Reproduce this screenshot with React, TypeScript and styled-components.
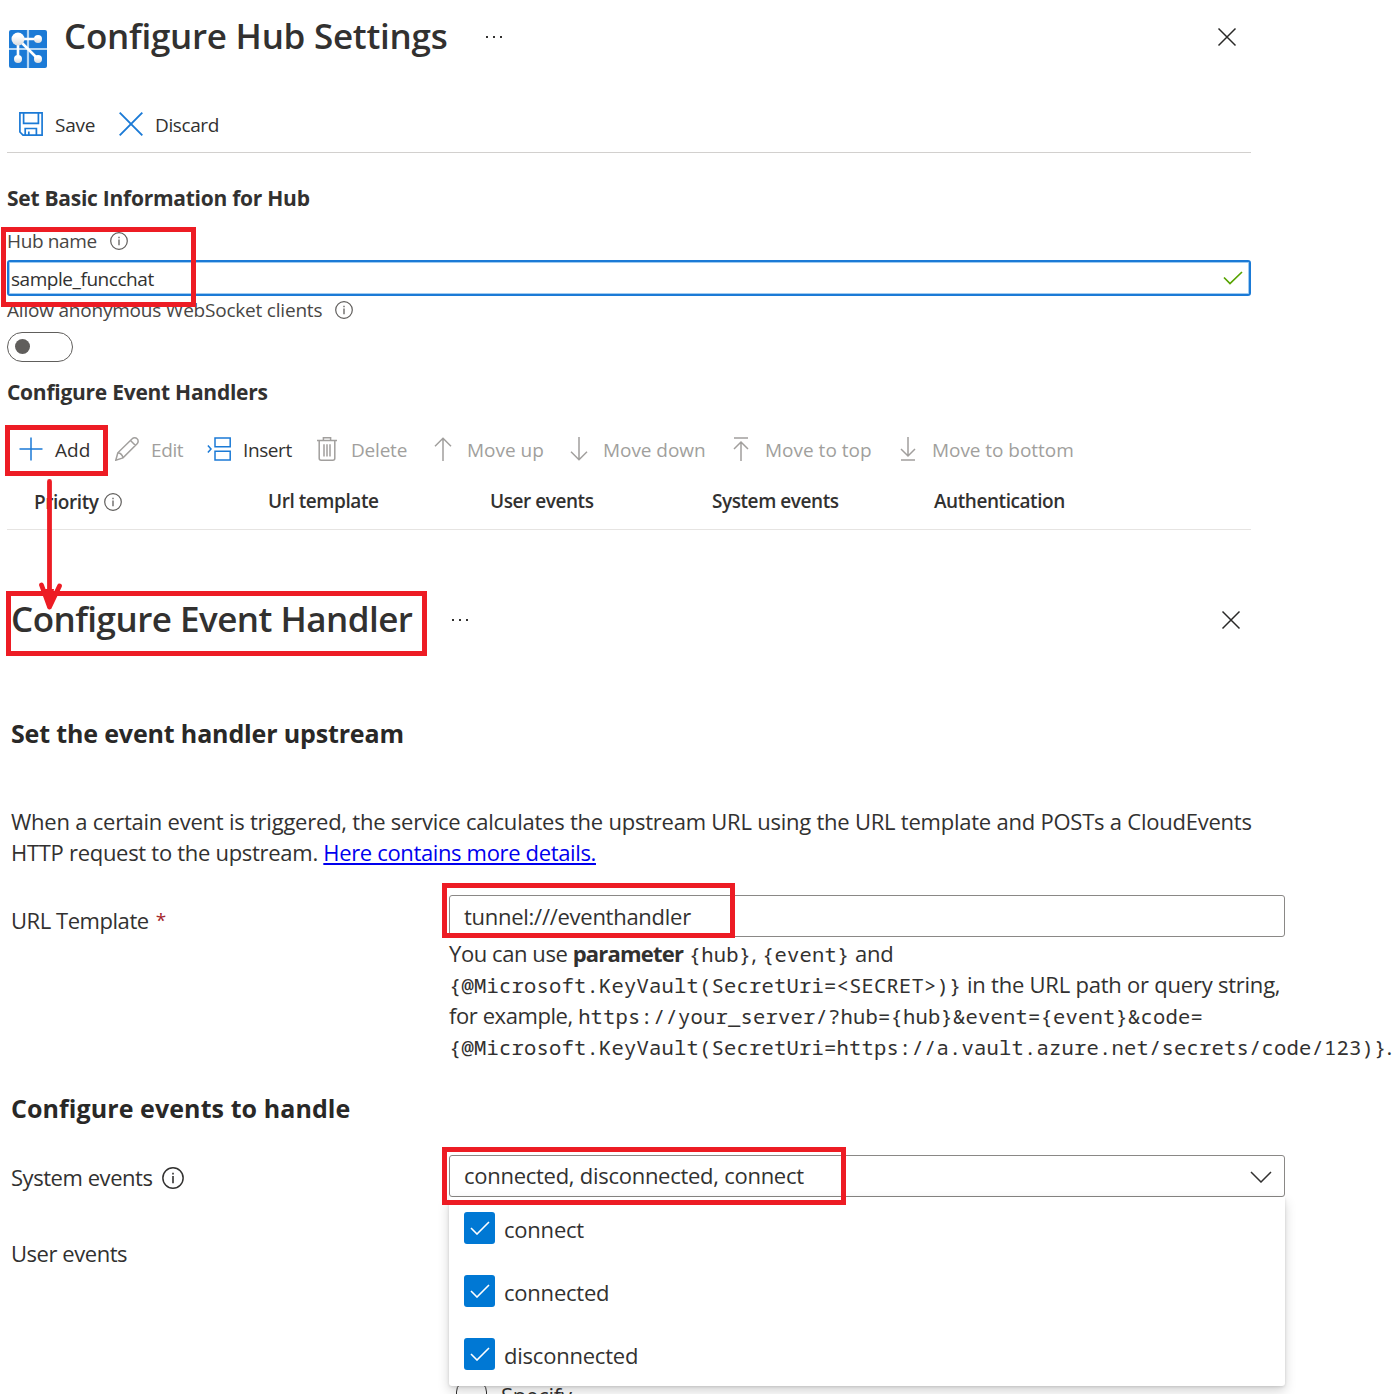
import React from 'react';
import styled, { createGlobalStyle, css } from 'styled-components';

const sans = '"Open Sans", "Noto Sans", sans-serif';
const mono = '"Noto Sans Mono", "DejaVu Sans Mono", monospace';
const ink = '#323130';
const blue = '#1b7ad6';
const red = '#ed1c24';

const GlobalStyle = createGlobalStyle`
  * { box-sizing: border-box; }
  body { margin: 0; background: #fff; color: ${ink}; font-family: ${sans}; }
  h1, h2, h3, p { margin: 0; }
  svg { display: block; flex: none; fill: none; }
`;

const Page = styled.main`
  position: relative;
  width: 1393px;
  height: 1394px;
  overflow: hidden;
`;

const HubPanel = styled.section`
  display: flex;
  flex-direction: column;
  width: 1251px;
  height: 530px;
  padding-left: 7px;
`;

const HubHeader = styled.header`
  display: flex;
  align-items: flex-start;
  height: 97px;
  padding: 12px 14px 0 2px;
`;

const LogoSlot = styled.span`
  padding: 18px 17px 0 0;
`;

const Title = styled.h1<{ $track: number }>`
  font-size: 35px;
  font-weight: 600;
  line-height: 48px;
  letter-spacing: ${p => p.$track}px;
  white-space: nowrap;
`;

const MoreSlot = styled.span<{ $gap: number }>`
  margin-left: ${p => p.$gap}px;
  padding-top: 23px;
`;

const CloseSlot = styled.span<{ $top: number }>`
  margin-left: auto;
  padding-top: ${p => p.$top}px;
`;

const CommandBar = styled.div`
  display: flex;
  align-items: center;
  height: 56px;
  padding-left: 12px;
  border-bottom: 1px solid #d2d0ce;
`;

const HandlerBar = styled.div`
  display: flex;
  align-items: center;
  height: 40px;
  margin-top: 23px;
  padding-left: 12px;
`;

const Command = styled.span<{ $width: number; $off?: boolean; $track?: number }>`
  display: flex;
  align-items: center;
  gap: 12px;
  width: ${p => p.$width}px;
  font-size: 19px;
  line-height: 26px;
  letter-spacing: ${p => p.$track ?? 0}px;
  white-space: nowrap;
  color: ${p => (p.$off ? '#a19f9d' : ink)};

  svg { margin-bottom: 2px; }
`;

const GroupTitle = styled.h3<{ $top: number }>`
  margin-top: ${p => p.$top}px;
  font-size: 21px;
  font-weight: 700;
  line-height: 30px;
  letter-spacing: -0.26px;
`;

const FieldLabel = styled.label<{ $top: number; $track: number }>`
  display: flex;
  align-items: center;
  gap: 13px;
  margin-top: ${p => p.$top}px;
  font-size: 19px;
  line-height: 26px;
  letter-spacing: ${p => p.$track}px;
  color: #484644;
`;

const NameInput = styled.div`
  display: flex;
  align-items: center;
  justify-content: space-between;
  height: 36px;
  margin-top: 6px;
  padding: 1px 6px 0 2px;
  border: 2px solid ${blue};
  border-radius: 3px;
  box-shadow: inset 0 0 0 1px #9fcbf1;
  font-size: 19px;
  letter-spacing: -0.45px;

  svg { margin-bottom: 2px; }
`;

const Toggle = styled.span`
  display: flex;
  align-items: center;
  width: 66px;
  height: 30px;
  margin-top: 9px;
  padding: 0 0 1px 7px;
  border: 1px solid #605e5c;
  border-radius: 15px;
`;

const Knob = styled.span`
  width: 15px;
  height: 15px;
  border-radius: 50%;
  background: #605e5c;
`;

const TableHead = styled.div`
  display: grid;
  grid-template-columns: 234px 222px 222px 222px 1fr;
  align-items: center;
  height: 56px;
  margin-top: 4px;
  padding-left: 27px;
  border-bottom: 1px solid #e6e4e2;
`;

const HeadCell = styled.span<{ $drop?: boolean }>`
  display: flex;
  align-items: center;
  gap: 6px;
  padding-bottom: ${p => (p.$drop ? 0 : 2)}px;
  font-size: 19px;
  font-weight: 600;
  line-height: 26px;
  letter-spacing: -0.44px;
`;

const HandlerPanel = styled.section`
  display: flex;
  flex-direction: column;
  padding: 65px 108px 0 11px;
`;

const HandlerHeader = styled.header`
  display: flex;
  align-items: flex-start;
  height: 48px;
  padding-right: 44px;
`;

const Heading = styled.h2<{ $top: number; $track: number }>`
  margin-top: ${p => p.$top}px;
  font-size: 25px;
  font-weight: 700;
  line-height: 34px;
  letter-spacing: ${p => p.$track}px;
  color: #292827;
`;

const bodyText = css`
  font-size: 22px;
  line-height: 31px;
  letter-spacing: -0.23px;
  white-space: nowrap;
`;

const Intro = styled.p`
  ${bodyText}
  margin-top: 56px;
`;

const Tight = styled.span`
  letter-spacing: -0.29px;
`;

const Link = styled.a`
  color: #0000ee;
  letter-spacing: -0.35px;
  text-decoration: underline;
  text-decoration-thickness: 2px;
  text-underline-offset: 2px;
`;

const FormRow = styled.div<{ $top: number }>`
  display: grid;
  grid-template-columns: 438px 836px;
  align-items: start;
  margin-top: ${p => p.$top}px;
`;

const RowLabel = styled.label<{ $pad: number }>`
  ${bodyText}
  display: flex;
  align-items: center;
  gap: 9px;
  padding-top: ${p => p.$pad}px;
  letter-spacing: -0.45px;
`;

const Required = styled.span`
  margin-left: -2px;
  color: #a4262c;
  font-size: 19px;
`;

const Field = styled.div`
  position: relative;
`;

const TextInput = styled.div<{ $lift?: number }>`
  ${bodyText}
  display: flex;
  align-items: center;
  justify-content: space-between;
  height: 42px;
  padding: 0 12px ${p => p.$lift ?? 0}px 14px;
  border: 1px solid #8a8886;
  border-radius: 3px;
  letter-spacing: -0.27px;

  svg { margin-top: 3px; }
`;

const Help = styled.p`
  ${bodyText}
  margin-top: 1px;
`;

const Lead = styled.span`
  letter-spacing: -0.42px;
`;

const Strong = styled.strong`
  letter-spacing: -0.8px;
`;

const Code = styled.code`
  font-family: ${mono};
  font-size: 20.5px;
  line-height: 1;
  letter-spacing: 0.2px;
`;

const Menu = styled.div`
  position: absolute;
  z-index: 1;
  top: 42px;
  left: 0;
  width: 836px;
  height: 189px;
  background: #fff;
  border-radius: 0 0 3px 3px;
  box-shadow: 0 5px 12px rgba(0, 0, 0, 0.17), 0 1px 3px rgba(0, 0, 0, 0.12);
`;

const Option = styled.div`
  ${bodyText}
  display: flex;
  align-items: center;
  gap: 9px;
  height: 63px;
  padding-left: 15px;
  letter-spacing: -0.22px;
`;

const OptionText = styled.span`
  padding-top: 1px;
`;

const Tick = styled.span`
  display: flex;
  align-items: center;
  justify-content: center;
  width: 31px;
  height: 32px;
  margin-bottom: 1px;
  border-radius: 3px;
  background: #0078d4;
`;

const SpecifyRow = styled.div`
  ${bodyText}
  display: flex;
  gap: 14px;
  height: 14px;
  margin-top: 111px;
  padding-left: 445px;
`;

const EmptyBox = styled.span`
  flex: none;
  width: 31px;
  height: 31px;
  border: 1px solid ${ink};
  border-radius: 12px;
`;

const Mark = styled.div<{ $x: number; $y: number; $w: number; $h: number }>`
  position: absolute;
  z-index: 2;
  left: ${p => p.$x}px;
  top: ${p => p.$y}px;
  width: ${p => p.$w}px;
  height: ${p => p.$h}px;
  border: 5px solid ${red};
`;

const ArrowMark = styled.svg`
  position: absolute;
  z-index: 3;
  left: 34px;
  top: 476px;
`;

const Logo = () => (
  <svg width="38" height="38" viewBox="0 0 38 38">
    <defs>
      <linearGradient id="node" x1="0" y1="0" x2="0" y2="1">
        <stop offset="0.3" stopColor="#fff" />
        <stop offset="1" stopColor="#d9dbdd" />
      </linearGradient>
    </defs>
    <rect width="38" height="38" rx="2" fill={blue} />
    <path d="M19 0v38M0 19h38" stroke="#b5d6f3" strokeWidth="2.2" />
    <path d="M9 9h20M9 9v20M9 9l20 20" stroke="#fff" strokeWidth="2.6" />
    <g fill="url(#node)">
      <circle cx="9" cy="9" r="6.5" />
      <circle cx="29" cy="9" r="4" />
      <circle cx="9" cy="29" r="4" />
      <circle cx="29" cy="29" r="4" />
    </g>
  </svg>
);

const Dots = () => (
  <svg width="18" height="4" viewBox="0 0 18 4">
    <g fill={ink}>
      <rect x="1" y="1" width="2" height="2" />
      <rect x="8" y="1" width="2" height="2" />
      <rect x="15" y="1" width="2" height="2" />
    </g>
  </svg>
);

const Close = () => (
  <svg width="20" height="20" viewBox="0 0 20 20" stroke="#292827" strokeWidth="1.5">
    <path d="M1.500 1.500l17 17M18.500 1.500l-17 17" />
  </svg>
);

const Info = ({ size = 18, color = '#605e5c' }: { size?: number; color?: string }) => (
  <svg width={size} height={size} viewBox="0 0 18 18" stroke={color}>
    <circle cx="9" cy="9" r="8.3" strokeWidth="1.2" />
    <path d="M9 7.400v5.800M9 4.800v1.400" strokeWidth="1.3" />
  </svg>
);

const glyphs: Record<string, React.ReactNode> = {
  save: <path d="M.9.9h22.2v22.2H4L.9 20zM4.6.9v10.4h14.8V.9M6.2 23.1v-6.6h11.2v6.6M9.800 23v-3.400" />,
  discard: <path d="M.7.7l22.6 22.6M23.3.7L.7 23.3" />,
  add: <path d="M12 .5v23M.5 12h23" />,
  edit: <path d="M.8 23.2l2-7.400L17.200 1.800a3.400 3.400 0 0 1 4.900 0 3.400 3.400 0 0 1 0 4.900L8 20.900zM2.800 15.800q4.400.6 5.200 5.100M15.500 3.500l5 5" />,
  insert: <path d="M8 .9h15.200v8.800H8zM8 14.300h15.200v8.800H8zM.9 8.500L4 12 .9 15.500" />,
  trash: <path d="M2 3.600h20M8.400 3.600V.8h7.200v2.800M4.200 3.600v17.600q0 2 2 2h11.600q2 0 2-2V3.600M9 7.200v12.200M12 7.200v12.200M15 7.200v12.200" />,
  up: <path d="M12 24V1.300M4 9.300l8-8 8 8" />,
  down: <path d="M12 0v22.700M4 14.700l8 8 8-8" />,
  top: <path d="M5 1h14M12 24V5M5 12l7-7 7 7" />,
  bottom: <path d="M5 23h14M12 0v19M5 12l7 7 7-7" />,
};

const Glyph = ({ name, color, weight = 1.5 }: { name: string; color: string; weight?: number }) => (
  <svg width="24" height="24" viewBox="0 0 24 24" stroke={color} strokeWidth={weight}>
    {glyphs[name]}
  </svg>
);

const commands = [
  { name: 'add', text: 'Add', width: 96 },
  { name: 'edit', text: 'Edit', width: 92, off: true, track: -0.4 },
  { name: 'insert', text: 'Insert', width: 108, track: -0.4 },
  { name: 'trash', text: 'Delete', width: 116, off: true, track: -0.2 },
  { name: 'up', text: 'Move up', width: 136, off: true },
  { name: 'down', text: 'Move down', width: 162, off: true, track: -0.05 },
  { name: 'top', text: 'Move to top', width: 167, off: true },
  { name: 'bottom', text: 'Move to bottom', width: 180, off: true, track: -0.05 },
];

export default function App() {
  return (
    <Page>
      <GlobalStyle />
      <HubPanel>
        <HubHeader>
          <LogoSlot><Logo /></LogoSlot>
          <Title $track={-0.26}>Configure Hub Settings</Title>
          <MoreSlot $gap={38}><Dots /></MoreSlot>
          <CloseSlot $top={15}><Close /></CloseSlot>
        </HubHeader>
        <CommandBar>
          <Command $width={100} $track={-0.2}><Glyph name="save" color={blue} weight={1.7} />Save</Command>
          <Command $width={110} $track={-0.4}><Glyph name="discard" color={blue} weight={1.9} />Discard</Command>
        </CommandBar>
        <GroupTitle $top={30}>Set Basic Information for Hub</GroupTitle>
        <FieldLabel $top={15} $track={-0.36}>Hub name <Info /></FieldLabel>
        <NameInput>
          sample_funcchat
          <svg width="20" height="14" viewBox="0 0 20 14" stroke="#57a300" strokeWidth="1.7">
            <path d="M1 6.500l6 6L19 1" />
          </svg>
        </NameInput>
        <FieldLabel $top={1} $track={-0.21}>Allow anonymous WebSocket clients <Info /></FieldLabel>
        <Toggle><Knob /></Toggle>
        <GroupTitle $top={15}>Configure Event Handlers</GroupTitle>
        <HandlerBar>
          {commands.map(c => (
            <Command key={c.name} $width={c.width} $off={c.off} $track={c.track}>
              <Glyph name={c.name} color={c.off ? '#a19f9d' : blue} />
              {c.text}
            </Command>
          ))}
        </HandlerBar>
        <TableHead>
          <HeadCell $drop>Priority <Info /></HeadCell>
          <HeadCell>Url template</HeadCell>
          <HeadCell>User events</HeadCell>
          <HeadCell>System events</HeadCell>
          <HeadCell>Authentication</HeadCell>
        </TableHead>
      </HubPanel>

      <HandlerPanel>
        <HandlerHeader>
          <Title $track={-0.52}>Configure Event Handler</Title>
          <MoreSlot $gap={39}><Dots /></MoreSlot>
          <CloseSlot $top={15}><Close /></CloseSlot>
        </HandlerHeader>
        <Heading $top={73} $track={-0.15}>Set the event handler upstream</Heading>
        <Intro>
          When a certain event is triggered, the service calculates the upstream URL using the URL template and POSTs a CloudEvents
          <br />
          <Tight>HTTP request to the upstream. </Tight><Link>Here contains more details.</Link>
        </Intro>
        <FormRow $top={27}>
          <RowLabel $pad={10}>URL Template <Required>*</Required></RowLabel>
          <Field>
            <TextInput>tunnel:///eventhandler</TextInput>
            <Help>
              <Lead>You can use </Lead><Strong>parameter</Strong> <Code>{'{hub}'}</Code>, <Code>{'{event}'}</Code> and
              <br />
              <Code>{'{@Microsoft.KeyVault(SecretUri=<SECRET>)}'}</Code> in the URL path or query string,
              <br />
              <Lead>for example, </Lead><Code>{'https://your_server/?hub={hub}&event={event}&code='}</Code>
              <br />
              <Code>{'{@Microsoft.KeyVault(SecretUri=https://a.vault.azure.net/secrets/code/123)}'}</Code>.
            </Help>
          </Field>
        </FormRow>
        <Heading $top={29} $track={0.08}>Configure events to handle</Heading>
        <FormRow $top={30}>
          <RowLabel $pad={7}>System events <Info size={22} color={ink} /></RowLabel>
          <Field>
            <TextInput $lift={2}>
              connected, disconnected, connect
              <svg width="22" height="12" viewBox="0 0 22 12" stroke={ink} strokeWidth="1.5">
                <path d="M1 1l10 10L21 1" />
              </svg>
            </TextInput>
            <Menu>
              {['connect', 'connected', 'disconnected'].map(name => (
                <Option key={name}>
                  <Tick>
                    <svg width="20" height="14" viewBox="0 0 20 14" stroke="#fff" strokeWidth="1.6">
                      <path d="M1 7l6 6L19 1" />
                    </svg>
                  </Tick>
                  <OptionText>{name}</OptionText>
                </Option>
              ))}
            </Menu>
          </Field>
        </FormRow>
        <FormRow $top={41}>
          <RowLabel $pad={0}>User events</RowLabel>
        </FormRow>
        <SpecifyRow><EmptyBox />Specify</SpecifyRow>
      </HandlerPanel>

      <Mark $x={1} $y={227} $w={195} $h={80} />
      <Mark $x={5} $y={425} $w={103} $h={51} />
      <Mark $x={6} $y={591} $w={421} $h={65} />
      <Mark $x={442} $y={883} $w={293} $h={55} />
      <Mark $x={442} $y={1147} $w={404} $h={58} />
      <ArrowMark width="32" height="136" viewBox="0 0 32 136" stroke={red} strokeWidth="4.8" strokeLinecap="round">
        <path d="M15.500 5.500v125M7.500 109l8 22M25.500 110l-10 21" />
        <path d="M11 113h9l-3 18h-3z" fill={red} stroke="none" />
      </ArrowMark>
    </Page>
  );
}
